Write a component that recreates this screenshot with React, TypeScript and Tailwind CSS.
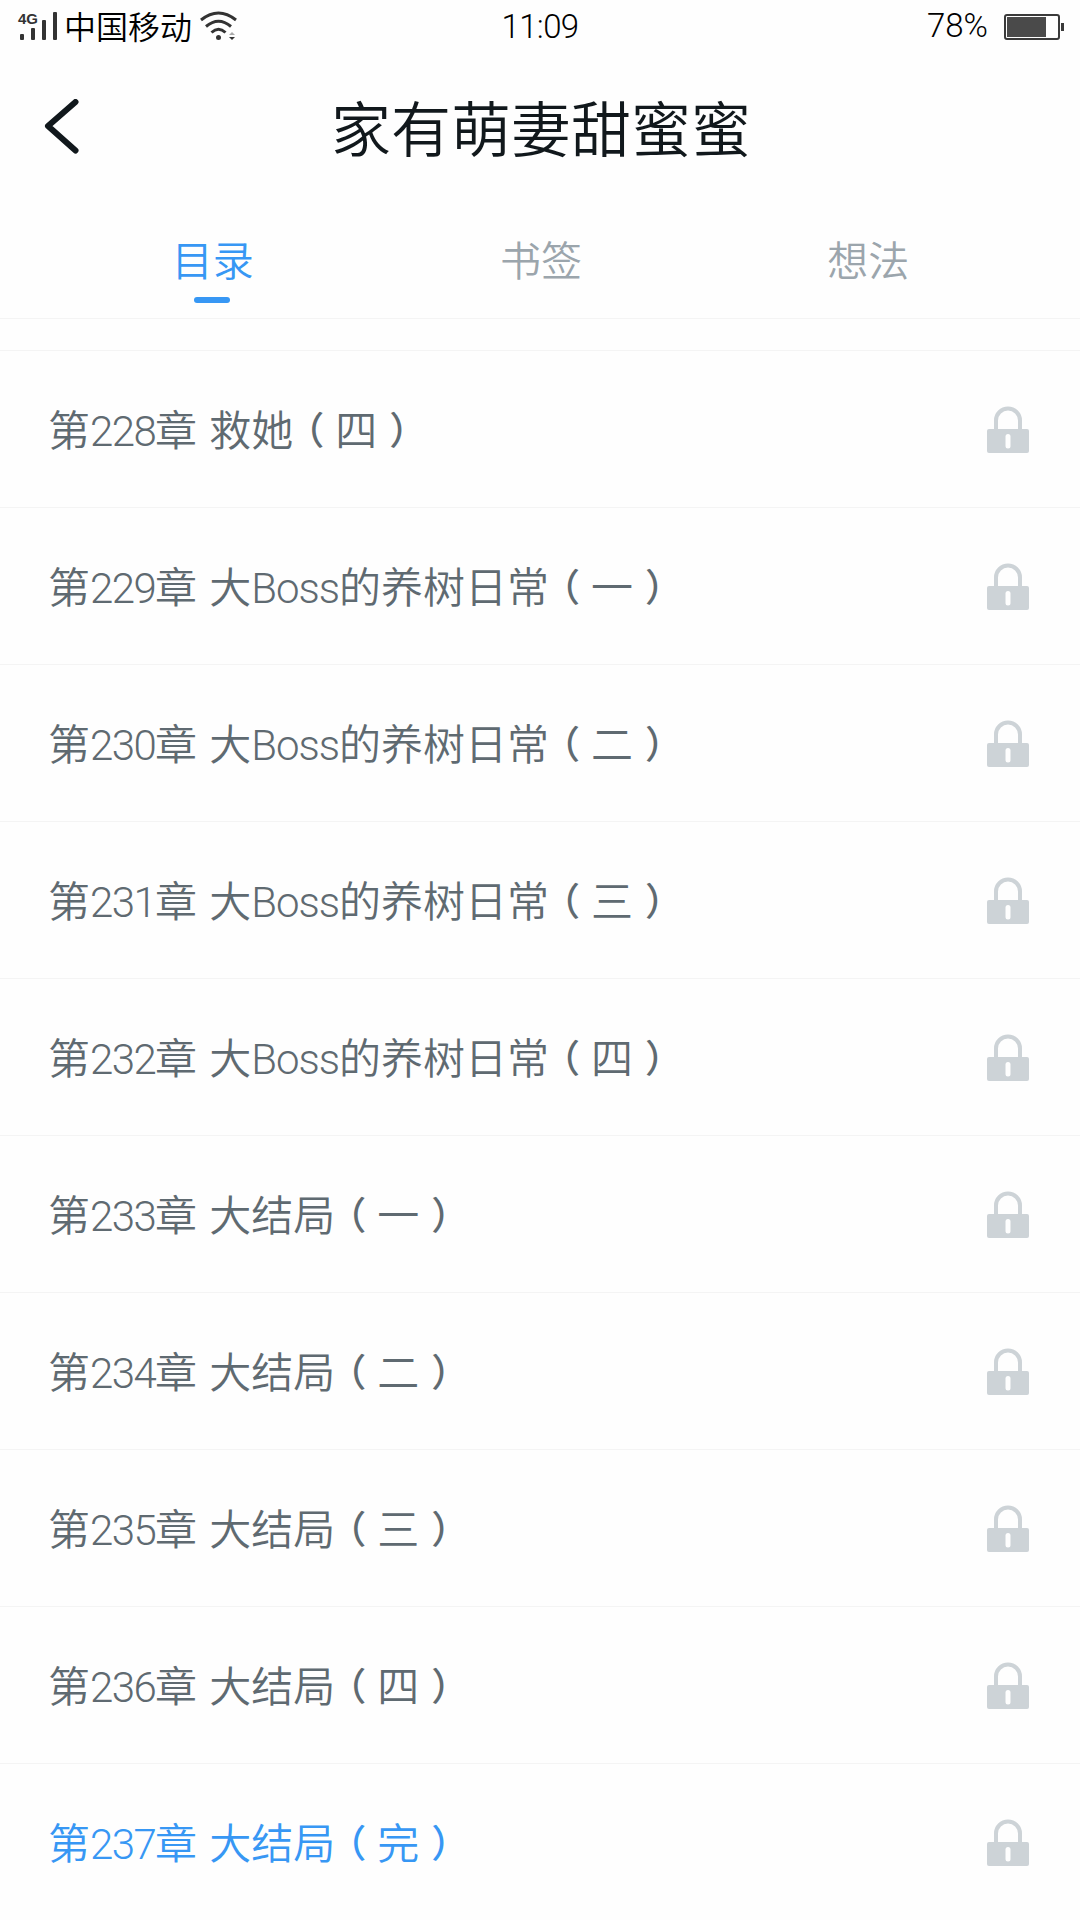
import React from "react";

interface Chapter {
  no: number;
  name: string;
  part: string;
}

const chapters: Chapter[] = [
  { no: 228, name: "救她", part: "四" },
  { no: 229, name: "大Boss的养树日常", part: "一" },
  { no: 230, name: "大Boss的养树日常", part: "二" },
  { no: 231, name: "大Boss的养树日常", part: "三" },
  { no: 232, name: "大Boss的养树日常", part: "四" },
  { no: 233, name: "大结局", part: "一" },
  { no: 234, name: "大结局", part: "二" },
  { no: 235, name: "大结局", part: "三" },
  { no: 236, name: "大结局", part: "四" },
  { no: 237, name: "大结局", part: "完" },
];

const tabs = ["目录", "书签", "想法"];
const currentChapter = 237;

const SignalIcon: React.FC = () => (
  <svg
    className="overflow-visible"
    width="42"
    height="36"
    viewBox="0 -2 42 36"
    fill="#333"
  >
    <text
      x="0"
      y="13"
      fontSize="15"
      fontWeight="700"
      fontFamily="Liberation Sans, sans-serif"
    >
      4G
    </text>
    <rect x="2" y="23" width="4" height="6" rx="1" />
    <rect x="13" y="17" width="4" height="12" rx="1" />
    <rect x="24" y="9" width="4" height="20" rx="1" />
    <rect x="35" y="1" width="4" height="28" rx="1" />
  </svg>
);

const WifiIcon: React.FC = () => (
  <svg width="38" height="32" viewBox="0 0 38 32" fill="none" stroke="#333">
    <path d="M1 9Q18.500 -5 36 9" strokeWidth="3" />
    <path d="M6 15.500Q18.500 5 31 15.500" strokeWidth="3" />
    <path d="M11.500 21.500Q18.500 15 25.500 21.500" strokeWidth="3" />
    <circle cx="18.500" cy="26.500" r="2.500" fill="#333" stroke="none" />
    <path d="M29 24h6l-3-3z" fill="#aaa" stroke="none" />
    <path d="M29 26h6l-3 3z" fill="#333" stroke="none" />
  </svg>
);

const BatteryIcon: React.FC = () => (
  <svg width="60" height="26" viewBox="0 0 60 26">
    <rect
      x="1"
      y="1"
      width="54"
      height="24"
      rx="2"
      fill="none"
      stroke="#3a3a3a"
      strokeWidth="2"
    />
    <rect x="3" y="3" width="39" height="20" fill="#4a4a4a" />
    <rect x="57" y="9" width="3" height="8" fill="#3a3a3a" />
  </svg>
);

const LockIcon: React.FC = () => (
  <svg width="42" height="47" viewBox="0 0 42 47" fill="none">
    <path
      d="M9 25V14.500a12 12 0 0 1 24 0V25"
      stroke="#cdd3d7"
      strokeWidth="4"
    />
    <rect y="23" width="42" height="24" rx="2" fill="#cdd3d7" />
    <rect x="18.500" y="28" width="5" height="14.500" rx="2.500" fill="#fefefe" />
  </svg>
);

const StatusBar: React.FC = () => (
  <div className="grid h-[54px] grid-cols-3 items-center text-black">
    <div className="flex items-center pl-[18px]">
      <SignalIcon />
      <span className="ml-[4px] pb-[4px] text-[32px] leading-[50px]">
        中国移动
      </span>
      <span className="ml-[8px]">
        <WifiIcon />
      </span>
    </div>
    <div className="text-center font-[Roboto] text-[33px] font-light tracking-[-0.6px]">
      11:09
    </div>
    <div className="flex items-center justify-end pr-[16px]">
      <span className="mr-[16px] pb-[2px] font-[Roboto] text-[33px] font-light">
        78%
      </span>
      <BatteryIcon />
    </div>
  </div>
);

// latin runs are set tighter than the hanzi around them
const Mixed: React.FC<{ text: string }> = ({ text }) => (
  <span>
    {text.split(/([A-Za-z0-9]+)/).map((run, i) =>
      i % 2 ? (
        <span
          key={i}
          className={`font-[Roboto] font-light ${
            /\d/.test(run) ? "tracking-[-1.600px]" : "tracking-[-1px]"
          }`}
        >
          {run}
        </span>
      ) : (
        run
      ),
    )}
  </span>
);

const ChapterRow: React.FC<{ chapter: Chapter }> = ({ chapter }) => (
  <li
    className={`flex h-[157px] shrink-0 items-center justify-between border-t border-[#f4f4f4] pr-[51px] pl-[48px] ${
      chapter.no === currentChapter ? "text-[#3797f4]" : "text-[#5f6a71]"
    }`}
  >
    <span className="flex pt-[2px] text-[42px] leading-[60px] whitespace-nowrap">
      <span className="mr-[12px]">
        <Mixed text={`第${chapter.no}章`} />
      </span>
      <Mixed text={chapter.name} />
      {/* half-width brackets, spaced to the middle of a full cell */}
      <span className="mr-[11px] ml-[12px] text-[38px] font-medium [font-feature-settings:'halt']">
        （
      </span>
      {chapter.part}
      <span className="ml-[12px] text-[38px] font-medium [font-feature-settings:'halt']">
        ）
      </span>
    </span>
    <LockIcon />
  </li>
);

const App: React.FC = () => {
  return (
    <div
      lang="zh-CN"
      className="flex h-[1920px] w-[1080px] flex-col overflow-hidden bg-[#fefefe] font-['Noto_Sans_CJK_SC',sans-serif] font-[350]"
    >
      <StatusBar />

      <header className="grid h-[146px] grid-cols-[200px_1fr_200px] items-center text-[#11181c]">
        <svg
          className="ml-[44px]"
          width="36"
          height="56"
          viewBox="0 0 36 56"
          fill="none"
          stroke="currentColor"
          strokeWidth="6"
          strokeLinecap="round"
          strokeLinejoin="round"
        >
          <path d="M31.500 3L4 27l27.500 24.500" />
        </svg>
        <h1 className="pb-[3px] pl-[2px] text-center text-[60px] leading-[80px]">
          家有萌妻甜蜜蜜
        </h1>
      </header>

      <nav className="grid h-[119px] grid-cols-3 border-b border-[#f4f4f4] px-[49px] pt-[28px]">
        {tabs.map((tab, i) => (
          <div
            key={tab}
            className={`flex flex-col items-center text-[41px] leading-[60px] ${
              i === 0 ? "text-[#3797f4]" : "pl-[2px] text-[#9ba5ac]"
            }`}
          >
            {tab}
            {i === 0 && (
              <span className="mt-[9px] mr-[2px] h-[6px] w-[36px] rounded-full bg-[#3797f4]" />
            )}
          </div>
        ))}
      </nav>

      <ul className="flex flex-col pt-[31px]">
        {chapters.map((chapter) => (
          <ChapterRow key={chapter.no} chapter={chapter} />
        ))}
      </ul>
    </div>
  );
};

export default App;
